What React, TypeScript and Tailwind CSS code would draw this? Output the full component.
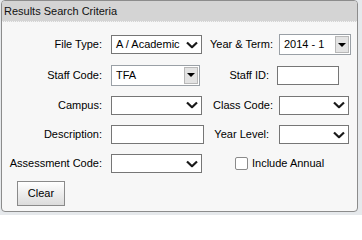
import React from "react"

const font = { fontFamily: '"Liberation Sans", Arial, sans-serif' }

function Chevron() {
  return (
    <svg width="12" height="7" viewBox="0 0 12 7" className="absolute right-[3px] top-1/2 -translate-y-1/2">
      <path d="M1 1 L6 5.8 L11 1" fill="none" stroke="#1a1a1a" strokeWidth="2.2" />
    </svg>
  )
}

function ModernSelect({ value = "", w }: { value?: string; w: string }) {
  return (
    <div className={`relative h-[19px] ${w} border border-[#767676] bg-white pl-[4px] text-[11px] leading-[17px] text-black`}>
      {value}
      <Chevron />
    </div>
  )
}

function OldSelect({ value, w }: { value: string; w: string }) {
  return (
    <div className={`relative flex h-[21px] ${w} items-center border border-[#9aa0a6] bg-white pl-[4px] text-[11px] text-black`}>
      <span className="flex-1">{value}</span>
      <div className="mr-[1px] flex h-[17px] w-[14px] items-center justify-center border border-[#b8b8b8] bg-[#e3e3e3]">
        <div className="h-0 w-0 border-x-[4px] border-t-[4px] border-x-transparent border-t-black" />
      </div>
    </div>
  )
}

function Input({ w }: { w: string }) {
  return <div className={`h-[19px] ${w} border border-[#767676] bg-white`} />
}

function Label({ text, w }: { text: string; w: string }) {
  return <div className={`${w} text-right text-[11px] text-black`}>{text}</div>
}

export default function App() {
  return (
    <div className="h-[215px] w-[362px] bg-[#e6e9ec]" style={font}>
      <div className="ml-[1px] flex h-[212px] w-[357px] flex-col overflow-hidden rounded-[4px] border border-[#8c8c8c] bg-[#f7f7f7]">
        <div className="h-[21px] border-b border-dotted border-[#f2f2f2] bg-[#d4d4d4] pl-[2px] text-[11px] leading-[20px] text-[#111]">
          Results Search Criteria
        </div>

        <div className="flex flex-col pt-[7px]">
          {/* ファイル種別 / 年度 */}
          <div className="flex h-[31px] items-center">
            <Label text="File Type:" w="w-[100px]" />
            <div className="ml-[9px]">
              <ModernSelect value="A / Academic" w="w-[91px]" />
            </div>
            <Label text="Year & Term:" w="w-[71px]" />
            <div className="ml-[6px]">
              <OldSelect value="2014 - 1" w="w-[72px]" />
            </div>
          </div>

          <div className="flex h-[30px] items-center">
            <Label text="Staff Code:" w="w-[100px]" />
            <div className="ml-[9px]">
              <OldSelect value="TFA" w="w-[89px]" />
            </div>
            <Label text="Staff ID:" w="w-[69px]" />
            <div className="ml-[8px]">
              <Input w="w-[62px]" />
            </div>
          </div>

          <div className="flex h-[30px] items-center">
            <Label text="Campus:" w="w-[100px]" />
            <div className="ml-[9px]">
              <ModernSelect w="w-[91px]" />
            </div>
            <Label text="Class Code:" w="w-[71px]" />
            <div className="ml-[6px]">
              <ModernSelect w="w-[70px]" />
            </div>
          </div>

          <div className="flex h-[29px] items-center">
            <Label text="Description:" w="w-[100px]" />
            <div className="ml-[9px]">
              <Input w="w-[93px]" />
            </div>
            <Label text="Year Level:" w="w-[65px]" />
            <div className="ml-[10px]">
              <ModernSelect w="w-[70px]" />
            </div>
          </div>

          <div className="flex h-[29px] items-center">
            <Label text="Assessment Code:" w="w-[100px]" />
            <div className="ml-[9px]">
              <ModernSelect w="w-[91px]" />
            </div>
            <div className="ml-[33px] flex items-center gap-[4px]">
              <div className="h-[13px] w-[13px] rounded-[2px] border border-[#8a8a8a] bg-white" />
              <span className="text-[11px] text-black">Include Annual</span>
            </div>
          </div>

          <div className="pl-[15px] pt-[3px]">
            <div className="flex h-[25px] w-[48px] items-center justify-center border border-[#8a8a8a] bg-gradient-to-b from-[#ffffff] to-[#dcdcdc] text-[11px] text-black">
              Clear
            </div>
          </div>
        </div>
      </div>
    </div>
  )
}
